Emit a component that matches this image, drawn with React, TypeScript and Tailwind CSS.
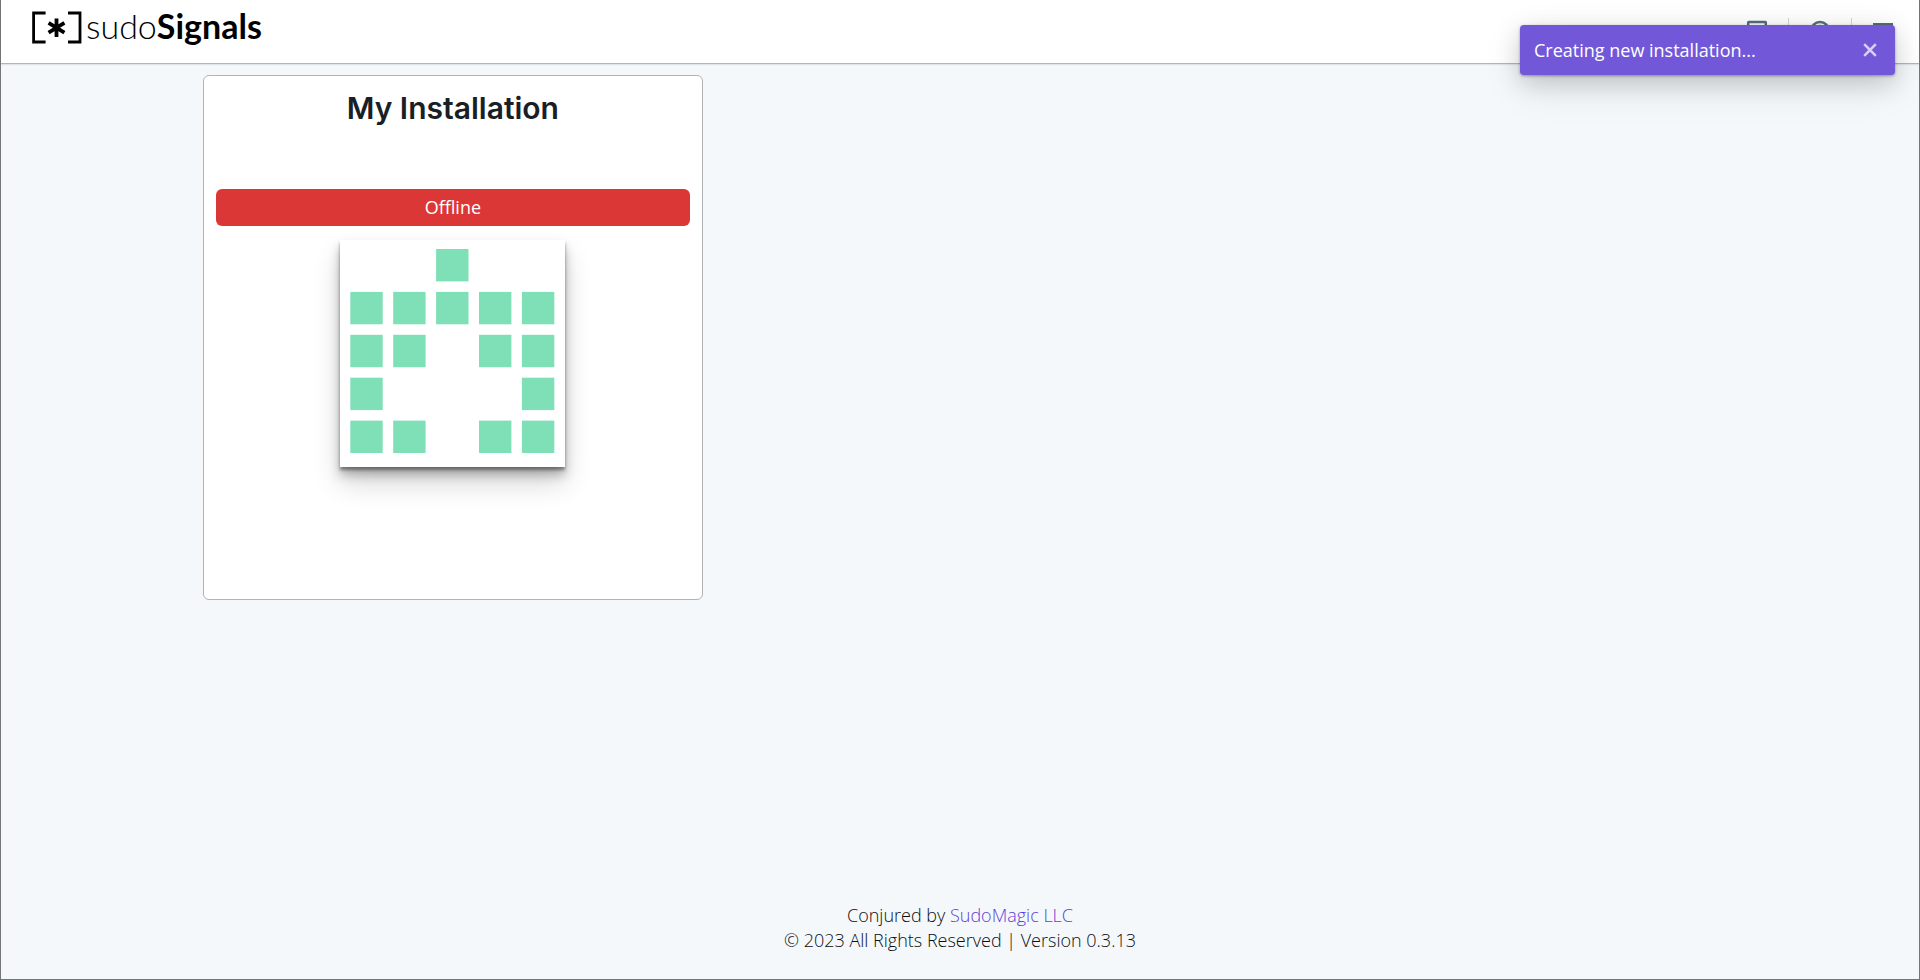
import React from "react";

const CELLS: [number, number][] = [
  [2, 0],
  [0, 1], [1, 1], [2, 1], [3, 1], [4, 1],
  [0, 2], [1, 2], [3, 2], [4, 2],
  [0, 3], [4, 3],
  [0, 4], [1, 4], [3, 4], [4, 4],
];

function Logo() {
  return (
    <a href="#" aria-label="sudoSignals" className="flex items-center gap-1 text-black">
      <svg viewBox="0 0 50 33" className="h-[33px] w-[50px]" fill="none" stroke="currentColor" aria-hidden="true">
        <path d="M13.6 2H1.6V31H13.6M36 2H48V31H36" strokeWidth="2.8" />
        <path d="M24.5 7.5V26M16.6 11.8L32.4 21.6M32.4 11.8L16.6 21.6" strokeWidth="3.8" />
      </svg>
      <span className="pb-1 font-['Lato',sans-serif] text-[34px] leading-9">
        <span className="font-light">sudo</span>
        <span className="font-bold">Signals</span>
      </span>
    </a>
  );
}

function NavIcons() {
  return (
    <nav className="flex items-center gap-[19px] text-[#546e7a]">
      <button type="button" aria-label="Displays">
        <svg viewBox="0 0 24 24" className="size-6" fill="none" stroke="currentColor" strokeWidth="2.5" aria-hidden="true">
          <rect x="3.2" y="2" width="17.6" height="14" rx="0.5" />
          <path d="M8 21h8M12 16v5" />
        </svg>
      </button>
      <span className="h-7 w-px bg-gray-300" />
      <button type="button" aria-label="Account">
        <svg viewBox="0 0 24 24" className="size-6" fill="none" stroke="currentColor" strokeWidth="2.5" aria-hidden="true">
          <circle cx="12" cy="11" r="9" />
          <circle cx="12" cy="9" r="3" />
          <path d="M6 17c3-3 9-3 12 0" />
        </svg>
      </button>
      <span className="h-7 w-px bg-gray-300" />
      <button type="button" aria-label="Menu">
        <svg viewBox="0 0 24 24" className="size-6" fill="currentColor" aria-hidden="true">
          <path d="M2 3h20v3H2zM2 10h20v3H2zM2 17h20v3H2z" />
        </svg>
      </button>
    </nav>
  );
}

function Identicon() {
  return (
    <svg
      viewBox="0 0 225 227"
      role="img"
      aria-label="Installation icon"
      className="h-[227px] w-[225px] bg-white shadow-[0_3px_3px_rgba(0,0,0,0.38),0_8px_10px_rgba(0,0,0,0.25),0_16px_26px_rgba(0,0,0,0.16)]"
    >
      {CELLS.map(([x, y]) => (
        <rect key={`${x}-${y}`} x={10.3 + x * 42.9} y={9 + y * 42.9} width="32.4" height="32.4" fill="#7fdfb6" />
      ))}
    </svg>
  );
}

function InstallationCard() {
  return (
    <article className="flex min-h-[525px] flex-col items-center rounded-md border border-[#b0b4b7] bg-white p-3">
      <h2 className="font-['Inter',sans-serif] text-[30px] leading-10 font-semibold text-[#1a1f26]">My Installation</h2>
      <div className="mt-[61px] w-full rounded-md bg-[#dc3737] text-center text-[18px] leading-[37px] text-white">
        Offline
      </div>
      <div className="mt-[14px]">
        <Identicon />
      </div>
    </article>
  );
}

function Toast() {
  return (
    <div
      role="status"
      className="absolute top-[25px] right-6 flex h-[50px] w-[375px] items-center justify-between rounded bg-[#7258d9] pr-[18px] pl-3.5 text-[18px] text-white shadow-[0_1px_3px_rgba(0,0,0,0.35),0_8px_24px_rgba(0,0,0,0.15),0_12px_40px_rgba(0,0,0,0.1)]"
    >
      <span>Creating new installation...</span>
      <button type="button" aria-label="Close" className="text-[#d9d0f5]">
        <svg viewBox="0 0 14 14" className="size-3.5" fill="none" stroke="currentColor" strokeWidth="2.6" aria-hidden="true">
          <path d="M1.2 1.2L12.8 12.8M12.8 1.2L1.2 12.8" />
        </svg>
      </button>
    </div>
  );
}

export default function App() {
  return (
    <div className="relative flex min-h-screen flex-col border-x border-b border-[#757575] bg-[#f4f8fb] font-['Open_Sans',sans-serif] text-[#0c0f12]">
      <header className="flex h-16 items-center justify-between border-b border-[#b5b5b8] bg-white pr-6 pl-[31px] shadow-[0_1px_1px_rgba(0,0,0,0.08)]">
        <div className="pb-2">
          <Logo />
        </div>
        <NavIcons />
      </header>
      <main className="mx-auto grid w-4/5 flex-1 grid-cols-3 items-start gap-[7px] px-2.5 pt-[11px]">
        <InstallationCard />
      </main>
      <footer className="pb-[26px] text-center text-[18px] leading-[25px] font-light">
        <p>
          Conjured by <a href="#" className="text-[#5f3fd6]">SudoMagic LLC</a>
        </p>
        <p>© 2023 All Rights Reserved | Version 0.3.13</p>
      </footer>
      <Toast />
    </div>
  );
}
